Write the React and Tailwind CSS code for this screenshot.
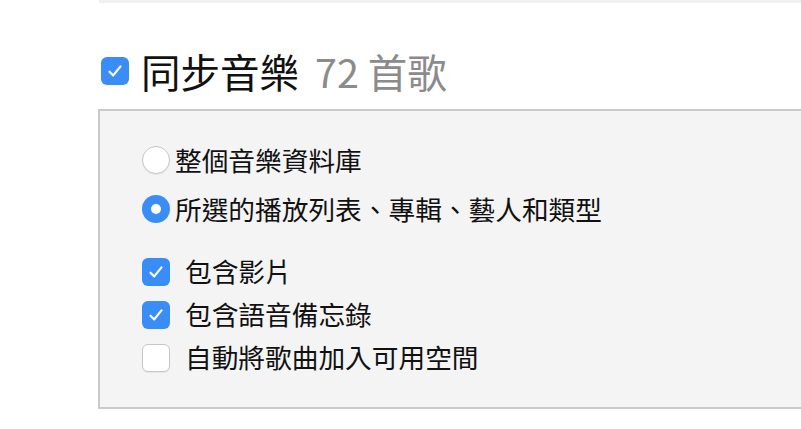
import React from "react";

const font = { fontFamily: '"Noto Sans CJK TC", "Noto Sans", sans-serif' };

function Check({ on }) {
  if (!on) {
    return (
      <span className="w-[28px] h-[28px] shrink-0 rounded-[6px] bg-white border border-[#c6c6c6] shadow-[0_1px_1px_rgba(0,0,0,0.06)]" />
    );
  }
  return (
    <span className="w-[28px] h-[28px] shrink-0 rounded-[6px] bg-[#3a8cf6] flex items-center justify-center">
      <svg viewBox="0 0 20 20" className="w-[22px] h-[22px]">
        <path d="M5 10.6 L8.4 14 L15 5.8" fill="none" stroke="#fff" strokeWidth="2" strokeLinecap="round" strokeLinejoin="round" />
      </svg>
    </span>
  );
}

function Radio({ on }) {
  if (!on) {
    return <span className="w-[28px] h-[28px] shrink-0 rounded-full bg-white border border-[#c6c6c6] shadow-[0_1px_1px_rgba(0,0,0,0.06)]" />;
  }
  return (
    <span className="w-[28px] h-[28px] shrink-0 rounded-full bg-[#3a8cf6] flex items-center justify-center">
      <span className="w-[10px] h-[10px] rounded-full bg-white" />
    </span>
  );
}

export default function App() {
  return (
    <div className="w-[801px] h-[429px] overflow-hidden bg-white text-[#111111]" style={font}>
      <div className="ml-[99px] h-[3px] bg-[#f0f0f0]" />

      <div className="ml-[101px] mt-[48px] h-[40px] flex items-center">
        <Check on />
        <span className="ml-[12px] text-[39.5px] leading-none">同步音樂</span>
        <span className="ml-[16px] text-[39.5px] leading-none text-[#8b8b8b]">72 首歌</span>
      </div>

      <div className="ml-[98px] mt-[18px] w-[760px] h-[300px] bg-[#f4f4f4] border-2 border-r-0 border-[#cacaca] pl-[42px] pt-[25px]">
        <div className="h-[48px] flex items-center">
          <Radio />
          <span className="ml-[5px] text-[26.7px] leading-none">整個音樂資料庫</span>
        </div>
        <div className="h-[48px] mt-[1px] flex items-center">
          <Radio on />
          <span className="ml-[5px] text-[26.7px] leading-none">所選的播放列表、專輯、藝人和類型</span>
        </div>

        <div className="mt-[17px]">
          <div className="h-[43px] flex items-center">
            <Check on />
            <span className="ml-[15px] text-[26.7px] leading-none">包含影片</span>
          </div>
          <div className="h-[43px] flex items-center">
            <Check on />
            <span className="ml-[15px] text-[26.7px] leading-none">包含語音備忘錄</span>
          </div>
          <div className="h-[43px] flex items-center">
            <Check />
            <span className="ml-[15px] text-[26.7px] leading-none">自動將歌曲加入可用空間</span>
          </div>
        </div>
      </div>
    </div>
  );
}
